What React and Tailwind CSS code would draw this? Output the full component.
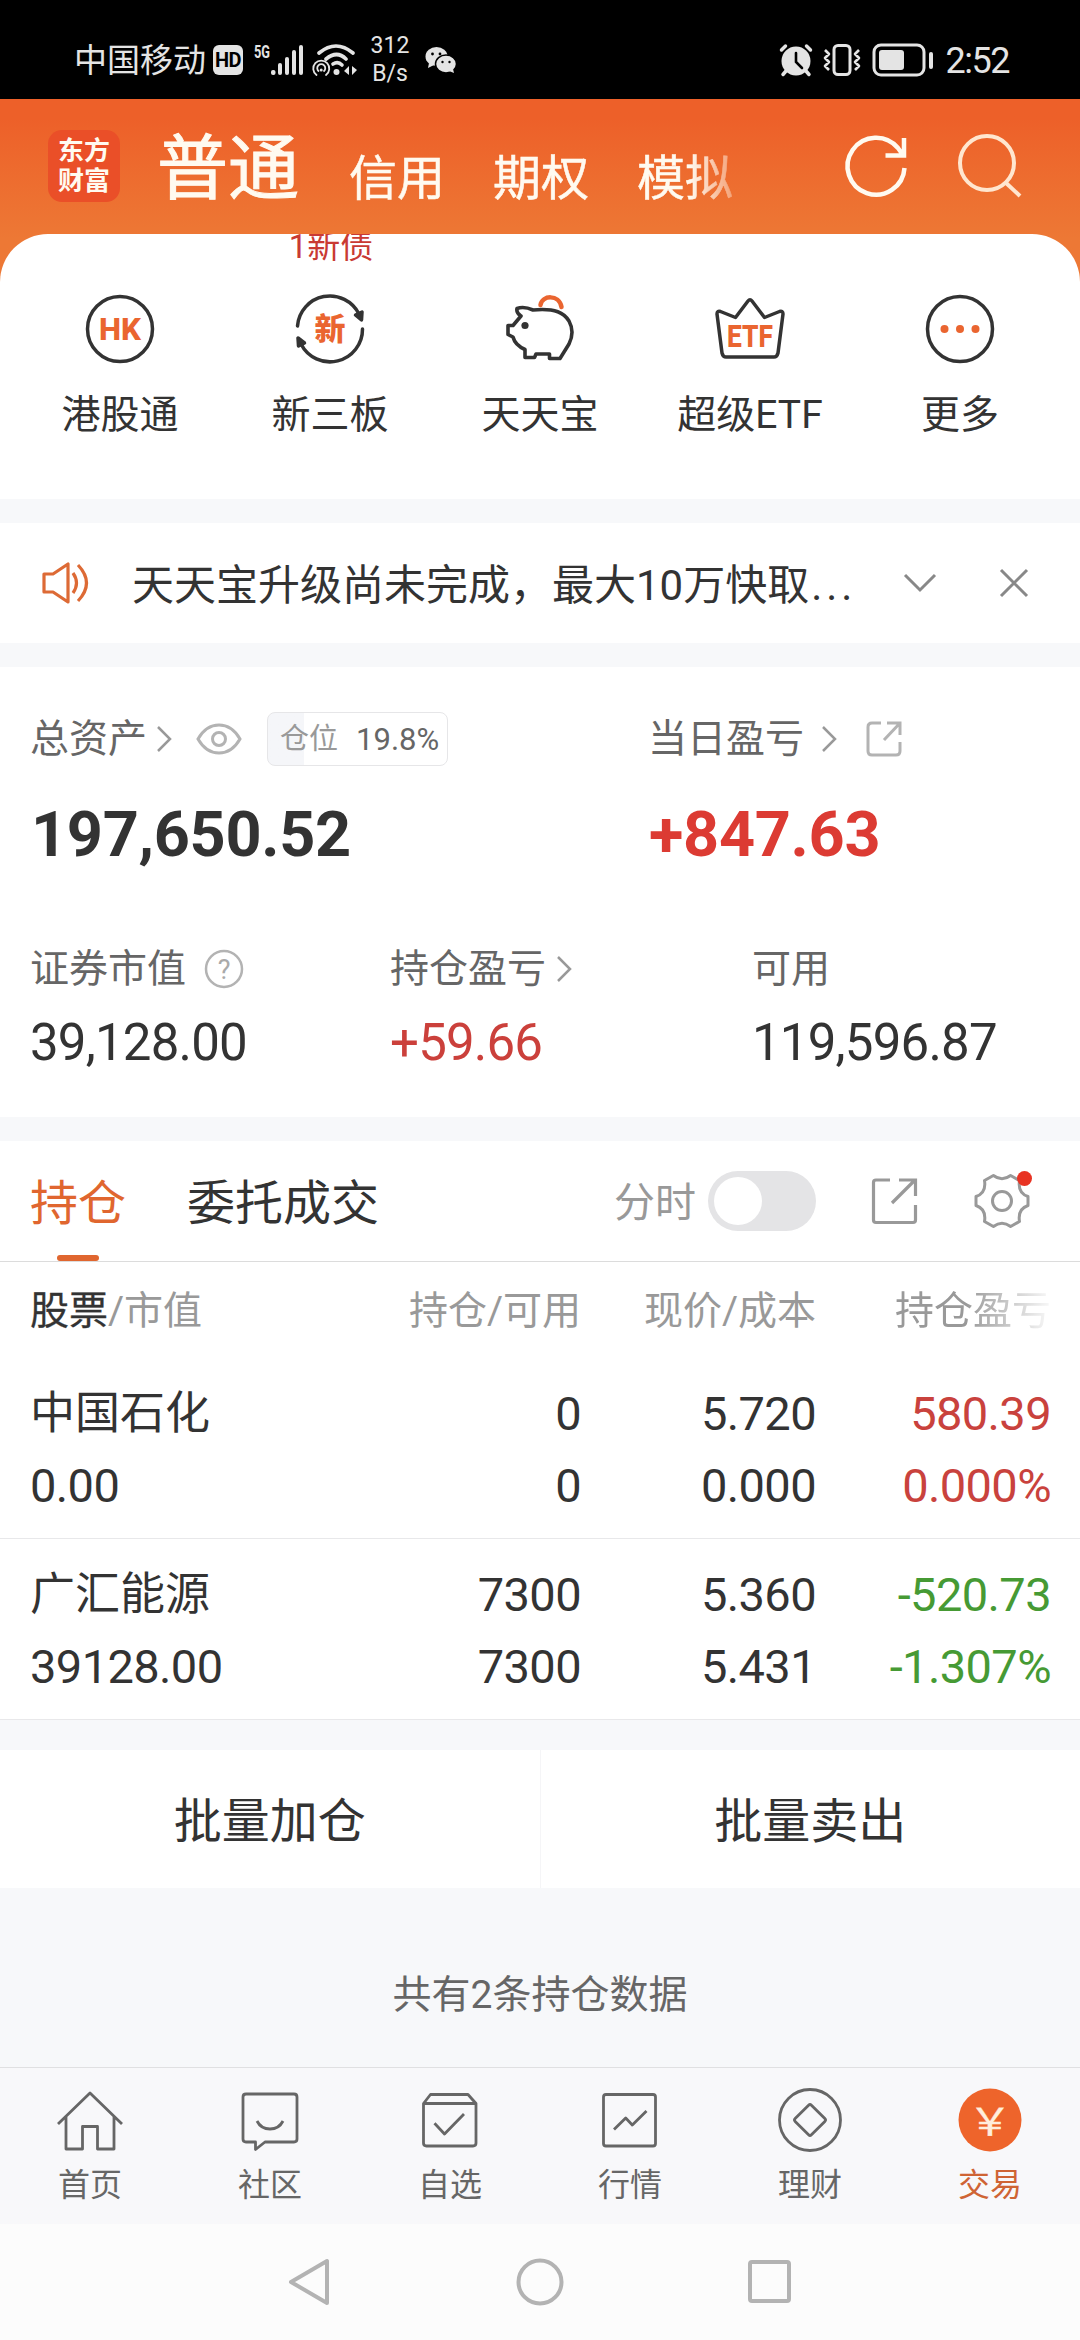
import { useState } from "react";

const shortcuts = [
  { id: "hk", label: "港股通" },
  { id: "neeq", label: "新三板" },
  { id: "pig", label: "天天宝" },
  { id: "etf", label: "超级ETF" },
  { id: "more", label: "更多" },
];

const holdings = [
  {
    name: "中国石化", value: "0.00", amount: "0", usable: "0",
    price: "5.720", cost: "0.000", profit: "580.39", rate: "0.000%", up: true,
  },
  {
    name: "广汇能源", value: "39128.00", amount: "7300", usable: "7300",
    price: "5.360", cost: "5.431", profit: "-520.73", rate: "-1.307%", up: false,
  },
];

const tabs = [
  { id: "home", label: "首页" },
  { id: "chat", label: "社区" },
  { id: "picks", label: "自选" },
  { id: "market", label: "行情" },
  { id: "wealth", label: "理财" },
  { id: "trade", label: "交易" },
];

function StatusBar() {
  return (
    <div className="h-[99px] bg-black text-[#e4e4e4] flex items-center pl-[74px] pr-[71px] pt-[21px]">
      <span className="text-[33px] leading-none">中国移动</span>
      <span className="ml-[7px] w-[30px] h-[30px] rounded-md bg-[#e4e4e4] text-black text-[20px] font-bold leading-none tracking-tight flex items-center justify-center">
        HD
      </span>
      <svg className="ml-[9px] overflow-visible" width="52" height="34" viewBox="0 0 52 34" fill="#e4e4e4">
        <text x="2" y="15" fontSize="18" fontWeight="700" textLength="16" lengthAdjust="spacingAndGlyphs">5G</text>
        <rect x="19" y="27" width="4.5" height="5" rx="2" />
        <rect x="26" y="20" width="4" height="12" rx="2" />
        <rect x="33" y="14" width="4" height="18" rx="2" />
        <rect x="40" y="7" width="4" height="25" rx="2" />
        <rect x="47" y="2" width="4" height="30" rx="2" />
      </svg>
      <svg className="ml-2" width="46" height="34" viewBox="0 0 46 34" fill="none" stroke="#e4e4e4" strokeWidth="3.6" strokeLinecap="round">
        <path d="M7 10Q24 -4 41 10M14 16Q25 7 34 16" />
        <path d="M21 21Q26 18 30 22" />
        <circle cx="24.500" cy="29" r="3" fill="#e4e4e4" stroke="none" />
        <path d="M4.500 32A8 8 0 1 1 14 32M6.500 28A4 4 0 1 1 12 28" strokeWidth="1.800" />
        <circle cx="9.200" cy="27" r="1.500" fill="#e4e4e4" stroke="none" />
        <path d="M37 23v9l-5-4zM40 23l5 4-5 5z" fill="#e4e4e4" stroke="none" />
      </svg>
      <span className="ml-[12px] w-10 text-[23px] leading-[28px] text-center">
        312
        <br />
        B/s
      </span>
      <svg className="ml-[15px]" width="32" height="28" viewBox="0 0 32 28" fill="#e4e4e4">
        <ellipse cx="11.500" cy="10.500" rx="11" ry="9.500" />
        <path d="M4 17l-1 5 6-3z" />
        <ellipse cx="21" cy="18" rx="10.500" ry="9" stroke="#000" strokeWidth="1.500" />
        <path d="M24 25l5 2-1-4z" />
        <g fill="#000">
          <circle cx="7.500" cy="8" r="1.400" />
          <circle cx="15" cy="8" r="1.400" />
          <circle cx="17.500" cy="16" r="1.200" />
          <circle cx="24.500" cy="16" r="1.200" />
        </g>
      </svg>
      <svg className="ml-auto" width="34" height="34" viewBox="0 0 34 34" fill="none" stroke="#e4e4e4" strokeLinecap="round">
        <circle cx="17" cy="18" r="14.500" fill="#e4e4e4" stroke="none" />
        <path d="M2.500 7l4-4M31.500 7l-4-4M7 28l-3 3.500M27 28l3 3.500" strokeWidth="3.500" />
        <path d="M17 10v9l6 6" stroke="#000" strokeWidth="2.600" />
      </svg>
      <svg className="ml-[9px]" width="40" height="34" viewBox="0 0 40 34" fill="none" stroke="#e4e4e4" strokeWidth="3">
        <rect x="12" y="2.500" width="16" height="29" rx="4" />
        <path d="M3 7l4 4-4 4 4 4-4 4 4 4M37 7l-4 4 4 4-4 4 4 4-4 4" strokeWidth="2.600" strokeLinejoin="round" />
      </svg>
      <svg className="ml-[10px]" width="62" height="34" viewBox="0 0 62 34" fill="#e4e4e4">
        <rect x="2" y="2" width="50" height="30" rx="7" fill="none" stroke="#e4e4e4" strokeWidth="3" />
        <rect x="7" y="7" width="25" height="20" rx="3" />
        <rect x="57" y="9" width="4" height="17" rx="2" />
      </svg>
      <span className="ml-3 mt-[2px] text-[36px] leading-none tracking-[-1.500px]">2:52</span>
    </div>
  );
}

function Header() {
  return (
    <div className="h-[135px] flex items-center text-[#fffaf0]">
      <div className="ml-12 mt-[-1px] w-[72px] h-[72px] rounded-[14px] bg-[#ea4f28] text-[26px] leading-[30px] font-bold flex flex-col items-center justify-center">
        <span>东方</span>
        <span>财富</span>
      </div>
      <span className="ml-[37px] mt-[4px] w-[142px] text-[71px] leading-none whitespace-nowrap [-webkit-text-stroke:1px_currentColor]">普通</span>
      <div className="ml-[50px] mt-[25px] w-[400px] flex gap-12 text-[48px] leading-[60px] whitespace-nowrap [-webkit-text-stroke:0.5px_currentColor] [mask-image:linear-gradient(to_right,black_340px,transparent_410px)]">
        <span>信用</span>
        <span>期权</span>
        <span>模拟</span>
      </div>
      <svg className="ml-auto" width="68" height="68" viewBox="-34 -34 68 68" fill="none" stroke="currentColor" strokeWidth="4.500">
        <path d="M28.500 1A28.500 28.500 0 1 1 22 -19L27 -12M28 -29V-11.500H9.500" />
      </svg>
      <svg className="ml-[47px] mr-[57px]" width="66" height="68" viewBox="-33 -34 66 68" fill="none" stroke="#ffe6cf" strokeWidth="4">
        <circle cx="-3" cy="-4" r="27" />
        <path d="M15.500 15.500L30 29" />
      </svg>
    </div>
  );
}

function ShortcutIcon({ id }) {
  return (
    <svg width="76" height="76" viewBox="-38 -38 76 76" fill="none" stroke="#333" strokeWidth="3.500" strokeLinejoin="round" strokeLinecap="round">
      {id === "hk" && (
        <>
          <circle r="32.500" />
          <text y="11" textAnchor="middle" textLength="42" lengthAdjust="spacingAndGlyphs" fontSize="31" fontWeight="800" fill="#ea6530" stroke="none">HK</text>
        </>
      )}
      {id === "neeq" && (
        <>
          <path d="M-32.500 -3A32.500 32.500 0 0 1 29 -15M32.500 0A32.500 32.500 0 0 1 -29 15" />
          <path d="M25.500 -14L32 -17 31.500 -9zM-25.500 14L-32 9 -31.500 17z" fill="#333" />
          <text y="11" textAnchor="middle" fontSize="31" fontWeight="900" fill="#ea6530" stroke="none">新</text>
        </>
      )}
      {id === "pig" && (
        <g transform="translate(-50 -49)">
          <path d="M50.500 25C52 15 69 14 71.500 27" stroke="#ea6530" strokeWidth="4.500" />
          <path d="M27 28.500Q34 26 43 30C66 28 74 33 79 41Q85 52 79 64L70 78.500H59.500V74H46L44.500 77.500H35V69.500Q25 65 23 57L18 54.500V45.500H23L31 36Q26 33 27 28.500Z" strokeWidth="3.600" />
          <circle cx="35" cy="45.500" r="3.600" fill="#333" stroke="none" />
        </g>
      )}
      {id === "etf" && (
        <>
          <path d="M-33 -15Q-33 -18.500 -29.500 -17.500L-14.500 -11.500 -2 -28Q0 -30.500 2 -28L14.500 -11.500 29.500 -17.500Q33 -18.500 33 -15L28 24Q27 28 24 28H-24Q-27 28 -28 24Z" />
          <text y="17.500" textAnchor="middle" textLength="46" lengthAdjust="spacingAndGlyphs" fontSize="32" fontWeight="800" fill="#ea6530" stroke="none">ETF</text>
        </>
      )}
      {id === "more" && (
        <>
          <circle r="32.500" />
          <g fill="#ea6530" stroke="none">
            <circle cx="-15.500" r="4" />
            <circle r="4" />
            <circle cx="15.500" r="4" />
          </g>
        </>
      )}
    </svg>
  );
}

function Shortcuts() {
  return (
    <div className="h-[265px] bg-white rounded-t-[48px] overflow-hidden">
      {/* previous row, scrolled under the header */}
      <div className="grid grid-cols-5 px-[15px] -mt-[4px] h-[31px]">
        <span className="col-start-2 ml-[2px] text-center text-[33px] leading-none text-[#c93a33]">1新债</span>
      </div>
      <div className="grid grid-cols-5 px-[15px] pt-[30px]">
        {shortcuts.map((s) => (
          <div key={s.id} className="flex flex-col items-center">
            <ShortcutIcon id={s.id} />
            <span className="mt-[29px] text-[39px] leading-none">{s.label}</span>
          </div>
        ))}
      </div>
    </div>
  );
}

function Notice() {
  return (
    <div className="mt-6 h-[120px] bg-white flex items-center pl-[41px] pr-[51px]">
      <svg width="50" height="44" viewBox="0 0 50 44" fill="none" stroke="#dd6a35" strokeWidth="3.200" strokeLinejoin="round">
        <path d="M3 13H12L27 3V41L12 31H3ZM32 12Q39 22 32 32M37 4Q54 22 37 40" />
      </svg>
      <span className="ml-[41px] mt-[6px] text-[42px] leading-none whitespace-nowrap">
        天天宝升级尚未完成，最大10万快取<span className="ml-[2px] tracking-[4px]">...</span>
      </span>
      <svg className="ml-auto" width="34" height="22" viewBox="0 0 34 22" fill="none" stroke="#888" strokeWidth="3">
        <path d="M2 3L17 18 32 3" />
      </svg>
      <svg className="ml-[62px]" width="30" height="30" viewBox="0 0 30 30" fill="none" stroke="#888" strokeWidth="3">
        <path d="M2 2L28 28M28 2L2 28" />
      </svg>
    </div>
  );
}

function Chevron({ className }) {
  return (
    <svg className={className} width="18" height="28" viewBox="0 0 18 28" fill="none" stroke="#999" strokeWidth="2.500">
      <path d="M3 2L15 14 3 26" />
    </svg>
  );
}

function Assets() {
  return (
    <div className="mt-6 h-[450px] bg-white text-[39px] leading-none">
      <div className="flex pt-[45px] text-[#666]">
        <div className="w-[648px] pl-[30px] h-[54px] flex items-center">
          <span>总资产</span>
          <Chevron className="ml-[8px]" />
          <svg className="ml-[23px]" width="46" height="34" viewBox="0 0 46 34" fill="none" stroke="#b3b3b3" strokeWidth="3">
            <path d="M2 17Q10 3 23 3T44 17Q36 31 23 31T2 17Z" />
            <circle cx="23" cy="17" r="6.500" />
          </svg>
          <span className="ml-[25px] w-[181px] h-[54px] rounded-lg border-[1.500px] border-[#e6e6e8] bg-linear-to-r from-[#f5f6f9] from-20% to-white to-20% flex items-center pl-3 text-[29px] text-[#999]">
            仓位
            <span className="ml-[18px] text-[31px] text-[#666]">19.8%</span>
          </span>
        </div>
        <div className="h-[54px] flex items-center">
          <span>当日盈亏</span>
          <Chevron className="ml-4" />
          <svg className="ml-[27px]" width="38" height="38" viewBox="0 0 38 38" fill="none" stroke="#b3b3b3" strokeWidth="3">
            <path d="M16 3H7Q3 3 3 7V31Q3 35 7 35H31Q35 35 35 31V22M22 3H35V15M35 3L19 20" />
          </svg>
        </div>
      </div>

      <div className="flex mt-[37px] text-[63px] font-bold">
        <span className="w-[649px] pl-[31px] tracking-[-0.300px]">197,650.52</span>
        <span className="text-[#dc3b33] tracking-[-0.300px]">+847.63</span>
      </div>

      <div className="flex mt-[82px] text-[#666] h-[42px] items-center">
        <div className="w-[390px] pl-[30px] flex items-center">
          <span>证券市值</span>
          <svg className="ml-[17px]" width="42" height="42" viewBox="-21 -21 42 42">
            <circle r="18" fill="none" stroke="#b3b3b3" strokeWidth="2.500" />
            <text y="10" textAnchor="middle" fontSize="27" fill="#aaa">?</text>
          </svg>
        </div>
        <div className="w-[362px] flex items-center">
          <span>持仓盈亏</span>
          <Chevron className="ml-[9px]" />
        </div>
        <span>可用</span>
      </div>
      <div className="flex mt-[27px] text-[51px] tracking-[-0.800px]">
        <span className="w-[390px] pl-[30px]">39,128.00</span>
        <span className="w-[362px] text-[#cb403b]">+59.66</span>
        <span>119,596.87</span>
      </div>
    </div>
  );
}

function HoldingTabs() {
  const [minute, setMinute] = useState(false);

  return (
    <div className="mt-6 h-[121px] bg-white border-b border-[#dcdcdc] flex pl-[30px] text-[48px] leading-none">
      <div className="flex flex-col items-center text-[#e0662f]">
        <span className="mt-[39px]">持仓</span>
        <span className="mt-auto w-[42px] h-[6px] rounded-sm bg-[#e0662f]" />
      </div>
      <span className="ml-[61px] mt-[39px]">委托成交</span>
      <span className="ml-[235px] mt-[42px] text-[41px] text-[#999]">分时</span>
      <button
        onClick={() => setMinute(!minute)}
        className={`ml-[12px] mt-[30px] w-[108px] h-[60px] rounded-full bg-[#e4e4e6] flex items-center px-[6px] ${minute ? "justify-end" : "justify-start"}`}
      >
        <span className="w-12 h-12 rounded-full bg-white" />
      </button>
      <svg className="ml-[54px] mt-[35px]" width="50" height="50" viewBox="0 0 50 50" fill="none" stroke="#999" strokeWidth="3.200">
        <path d="M20 4H6Q3.500 4 3.500 6.500V44Q3.500 46.500 6 46.500H43Q45.500 46.500 45.500 44V29M29 4H45.500V20M45 4L22 27" />
      </svg>
      <svg className="ml-[52px] mt-[28px]" width="64" height="64" viewBox="-30 -32 64 64" fill="none" stroke="#999" strokeWidth="3" strokeLinejoin="round">
        <path d="M-8.600 -25.500Q0 -19 8.600 -25.500L17.500 -20.500Q15.500 -8 26 -4.500V4.500Q15.500 8 17.500 20.500L8.600 25.500Q0 19 -8.600 25.500L-17.500 20.500Q-15.500 8 -26 4.500V-4.500Q-15.500 -8 -17.500 -20.500Z" />
        <circle r="9.500" />
        <circle cx="22.500" cy="-22.500" r="7.500" fill="#e83323" stroke="none" />
      </svg>
    </div>
  );
}

function HoldingTable() {
  return (
    <div className="bg-white">
      <div className="flex h-[98px] items-center text-[39px] leading-[48px] text-[#999] pl-[30px]">
        <span className="w-[300px]">
          <span className="text-[#333] [-webkit-text-stroke:0.3px_currentColor]">股票</span>/市值
        </span>
        <span className="w-[251px] text-right">持仓/可用</span>
        <span className="w-[235px] text-right">现价/成本</span>
        <span className="w-[235px] text-right [mask-image:linear-gradient(to_right,black_150px,transparent_240px)]">持仓盈亏</span>
      </div>
      {holdings.map((h, i) => (
        <div
          key={h.name}
          className={`flex border-b border-[#e8e8ea] pl-[30px] text-[47px] leading-[72px] tracking-[-0.600px] ${i === 0 ? "h-[179px] pt-[18px]" : "h-[181px] pt-[20px]"}`}
        >
          <div className="w-[300px] flex flex-col">
            <span className="text-[45px] tracking-normal">{h.name}</span>
            <span>{h.value}</span>
          </div>
          <div className="w-[251px] flex flex-col text-right">
            <span>{h.amount}</span>
            <span>{h.usable}</span>
          </div>
          <div className="w-[235px] flex flex-col text-right">
            <span>{h.price}</span>
            <span>{h.cost}</span>
          </div>
          <div className={`w-[235px] flex flex-col text-right ${h.up ? "text-[#c9423d]" : "text-[#469a34]"}`}>
            <span>{h.profit}</span>
            <span>{h.rate}</span>
          </div>
        </div>
      ))}
    </div>
  );
}

function TabIcon({ id }) {
  return (
    <svg width="68" height="68" viewBox="-34 -34 68 68" fill="none" stroke="#666" strokeWidth="2.800" strokeLinejoin="round">
      {id === "home" && <path d="M-32 4L0 -27 32 4M-24 -3V29H-7.500V6.500H7.500V29H24V-3" />}
      {id === "chat" && (
        <>
          <path d="M-24 -26H24Q27 -26 27 -23V19Q27 22 24 22H-5L-14.500 29.500V22H-24Q-27 22 -27 19V-23Q-27 -26 -24 -26Z" />
          <path d="M-13 1Q-9 9 0 9T13 1" />
        </>
      )}
      {id === "picks" && (
        <path d="M-26.500 -16.500L-19.500 -25.500H18L26 -16.500V23Q26 26 23 26H-23.500Q-26.500 26 -26.500 23ZM-26.500 -16.500H26M-15.500 3.300L-5.500 14 14 -6" />
      )}
      {id === "market" && (
        <>
          <rect x="-26.500" y="-25.500" width="52" height="51.500" rx="2.500" />
          <path d="M-16 9.500L-4.300 -2 2.300 5 16.500 -9" />
        </>
      )}
      {id === "wealth" && (
        <>
          <circle r="30.500" />
          <rect x="-11.500" y="-11.500" width="23" height="23" rx="2" transform="rotate(45)" />
        </>
      )}
      {id === "trade" && (
        <>
          <circle r="31.500" fill="#ee642b" stroke="none" />
          <text y="15" textAnchor="middle" textLength="44" lengthAdjust="spacingAndGlyphs" fontSize="38" fill="#ffeedd" stroke="#ffeedd" strokeWidth="0.300">￥</text>
        </>
      )}
    </svg>
  );
}

function TabBar() {
  const [active, setActive] = useState("trade");

  return (
    <div className="h-[157px] border-t border-[#e0e0e2] bg-[#f8f8fa] grid grid-cols-6 pt-[18px]">
      {tabs.map((t) => (
        <button key={t.id} onClick={() => setActive(t.id)} className="flex flex-col items-center">
          <TabIcon id={t.id} />
          <span className={`mt-[15px] text-[32px] leading-none ${active === t.id ? "text-[#cf6434]" : "text-[#666]"}`}>
            {t.label}
          </span>
        </button>
      ))}
    </div>
  );
}

function SystemNav() {
  return (
    <div className="h-[116px] bg-[#fcfcfc] flex items-center justify-center gap-[180px]">
      <svg width="50" height="50" viewBox="0 0 50 50" fill="none" stroke="#b3b3b3" strokeWidth="4" strokeLinejoin="round">
        <path d="M42 4V46L6 25Z" />
      </svg>
      <svg width="50" height="50" viewBox="0 0 50 50" fill="none" stroke="#b3b3b3" strokeWidth="4">
        <circle cx="25" cy="25" r="21.500" />
      </svg>
      <svg width="50" height="50" viewBox="0 0 50 50" fill="none" stroke="#b3b3b3" strokeWidth="4">
        <rect x="5" y="5" width="39" height="39" rx="2" />
      </svg>
    </div>
  );
}

export default function App() {
  return (
    <div lang="zh-CN" className="w-[1080px] h-[2340px] overflow-hidden flex flex-col bg-[#f7f8fa] text-[#333] [font-family:Roboto,'Noto_Sans_CJK_SC',sans-serif]">
      <StatusBar />
      <div className="bg-linear-to-b from-[#ed6029] from-5% to-[#ed7835] to-35%">
        <Header />
        <Shortcuts />
      </div>
      <Notice />
      <Assets />
      <HoldingTabs />
      <HoldingTable />
      <div className="mt-[30px] h-[138px] bg-white flex items-center text-[48px] leading-none">
        <button className="flex-1 h-full pt-[5px] border-r border-[#f5f5f7]">批量加仓</button>
        <button className="flex-1 h-full pt-[5px]">批量卖出</button>
      </div>
      <p className="flex-1 flex items-center justify-center pt-[35px] text-[39px] leading-none text-[#666]">
        共有2条持仓数据
      </p>
      <TabBar />
      <SystemNav />
    </div>
  );
}
